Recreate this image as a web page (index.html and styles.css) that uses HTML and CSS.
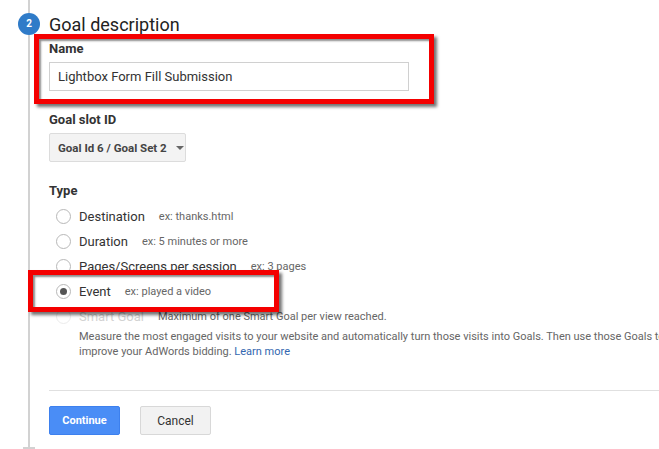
FILE: index.html
```html
<!DOCTYPE html>
<html>
<head>
<meta charset="utf-8">
<link rel="stylesheet" href="styles.css">
</head>
<body>
<div class="page">
  <div class="rail">
    <span class="seg-top"></span>
    <span class="step">2</span>
    <span class="seg"></span>
    <span class="tick"></span>
  </div>
  <div class="content">
    <h2 class="title">Goal description</h2>

    <div class="field-label">Name</div>
    <div class="input">Lightbox Form Fill Submission</div>

    <div class="field-label slot-label">Goal slot ID</div>
    <div class="dropdown">Goal Id 6 / Goal Set 2<span class="caret"></span></div>

    <div class="field-label type-label">Type</div>
    <div class="radios">
      <div class="radio-row"><span class="radio"></span><span class="r-label">Destination</span><span class="r-ex">ex: thanks.html</span></div>
      <div class="radio-row"><span class="radio"></span><span class="r-label">Duration</span><span class="r-ex">ex: 5 minutes or more</span></div>
      <div class="radio-row"><span class="radio"></span><span class="r-label">Pages/Screens per session</span><span class="r-ex">ex: 3 pages</span></div>
      <div class="radio-row"><span class="radio checked"></span><span class="r-label">Event</span><span class="r-ex">ex: played a video</span></div>
      <div class="radio-row disabled"><span class="radio"></span><span class="r-label">Smart Goal</span><span class="r-ex">Maximum of one Smart Goal per view reached.</span></div>
      <p class="desc">Measure the most engaged visits to your website and automatically turn those visits into Goals. Then use those Goals to<br>improve your AdWords bidding. <a class="learn" href="#">Learn more</a></p>
    </div>

    <div class="sep"></div>

    <div class="actions">
      <button class="btn btn-primary">Continue</button>
      <button class="btn btn-default">Cancel</button>
    </div>
  </div>
</div>
<div class="annot annot-name"></div>
<div class="annot annot-event"></div>
</body>
</html>
```

FILE: styles.css
```css
html, body {
  margin: 0;
  padding: 0;
  background: #fff;
  overflow: hidden;
}
body {
  width: 659px;
  height: 449px;
  font-family: Roboto, "Liberation Sans", Arial, sans-serif;
  color: #333;
  position: relative;
}
.page {
  display: flex;
  height: 449px;
}
.rail {
  width: 22px;
  margin-left: 18px;
  display: flex;
  flex-direction: column;
  align-items: center;
  flex: none;
}
.seg-top {
  width: 2px;
  height: 13px;
  background: #d2d2d2;
}
.step {
  width: 22px;
  height: 22px;
  border-radius: 50%;
  background: #2f7bc8;
  color: #fff;
  font-size: 10px;
  font-weight: bold;
  line-height: 22px;
  text-align: center;
  flex: none;
}
.seg {
  width: 2px;
  flex: 1;
  background: #d2d2d2;
}
.tick {
  width: 12px;
  height: 2px;
  background: #d2d2d2;
  flex: none;
}
.content {
  margin-left: 9px;
  padding-top: 14px;
  flex: 1;
  min-width: 0;
}
.title {
  margin: 0;
  font-size: 18px;
  line-height: 22px;
  font-weight: normal;
  color: #222;
}
.field-label {
  margin-top: 5px;
  font-size: 13px;
  line-height: 16px;
  font-weight: bold;
  color: #333;
}
.input {
  margin-top: 5px;
  width: 360px;
  height: 29px;
  box-sizing: border-box;
  border: 1px solid #d0d0d0;
  padding: 0 8px;
  font-size: 13px;
  line-height: 27px;
  color: #333;
}
.slot-label {
  margin-top: 21px;
}
.dropdown {
  margin-top: 5px;
  width: 137px;
  height: 29px;
  box-sizing: border-box;
  border: 1px solid #dcdcdc;
  border-radius: 2px;
  background: #f3f3f3;
  padding: 0 0 0 8px;
  display: flex;
  align-items: center;
  font-size: 11.5px;
  font-weight: bold;
  color: #444;
}
.caret {
  margin-left: 9px;
  width: 0;
  height: 0;
  border-left: 4px solid transparent;
  border-right: 4px solid transparent;
  border-top: 4px solid #666;
}
.type-label {
  margin-top: 21px;
}
.radios {
  margin-top: 5px;
}
.radio-row {
  height: 25px;
  display: flex;
  align-items: center;
  padding-left: 7px;
}
.radio {
  width: 15px;
  height: 15px;
  box-sizing: border-box;
  border: 1px solid #b8b8b8;
  border-radius: 50%;
  background: #fff;
  flex: none;
  display: flex;
  align-items: center;
  justify-content: center;
}
.radio.checked::after {
  content: "";
  width: 7px;
  height: 7px;
  border-radius: 50%;
  background: #555;
}
.r-label {
  margin-left: 8px;
  font-size: 13px;
  color: #333;
}
.r-ex {
  margin-left: 14px;
  font-size: 11px;
  color: #666;
  white-space: nowrap;
}
.disabled .radio {
  border-color: #ececec;
}
.disabled .r-label {
  color: #d2d2d2;
}
.desc {
  margin: 0 0 0 30px;
  font-size: 11px;
  line-height: 15px;
  color: #666;
  white-space: nowrap;
}
.learn {
  color: #3367b0;
  text-decoration: none;
}
.sep {
  margin-top: 31px;
  height: 1px;
  background: #e0e0e0;
}
.actions {
  margin-top: 15px;
  display: flex;
  gap: 20px;
}
.btn {
  width: 71px;
  height: 29px;
  box-sizing: border-box;
  border-radius: 2px;
  font-family: Roboto, "Liberation Sans", Arial, sans-serif;
  padding: 0;
}
.btn-primary {
  background: #4a8df6;
  border: 1px solid #3d80ee;
  color: #fff;
  font-weight: bold;
  font-size: 11px;
}
.btn-default {
  background: #f2f2f2;
  border: 1px solid #d8d8d8;
  color: #333;
  font-size: 12px;
}
.annot {
  position: absolute;
  border: 5px solid #f40000;
  box-sizing: border-box;
  box-shadow: 3px 3px 3px rgba(0, 0, 0, 0.55), inset 2px 2px 2px rgba(0, 0, 0, 0.45);
}
.annot-name {
  left: 34px;
  top: 34px;
  width: 400px;
  height: 70px;
}
.annot-event {
  left: 28px;
  top: 270px;
  width: 251px;
  height: 42px;
}
```
